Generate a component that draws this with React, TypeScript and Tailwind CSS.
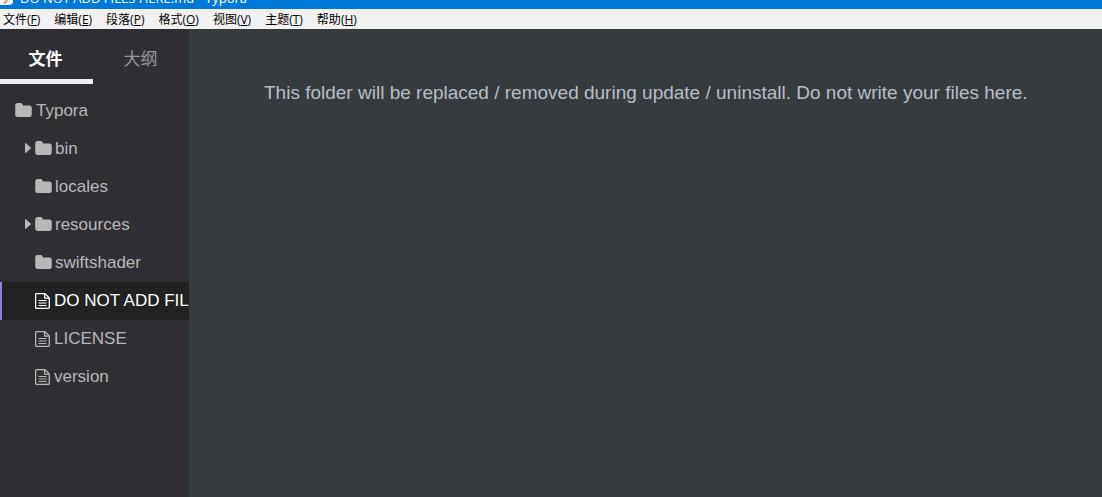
type Entry = {
  name: string;
  kind: 'folder' | 'file';
  expandable?: boolean;
  active?: boolean;
};

const menus = [
  { label: '文件', accessKey: 'F' },
  { label: '编辑', accessKey: 'E' },
  { label: '段落', accessKey: 'P' },
  { label: '格式', accessKey: 'O' },
  { label: '视图', accessKey: 'V' },
  { label: '主题', accessKey: 'T' },
  { label: '帮助', accessKey: 'H' },
];

const entries: Entry[] = [
  { name: 'bin', kind: 'folder', expandable: true },
  { name: 'locales', kind: 'folder' },
  { name: 'resources', kind: 'folder', expandable: true },
  { name: 'swiftshader', kind: 'folder' },
  { name: 'DO NOT ADD FILES HERE.md', kind: 'file', active: true },
  { name: 'LICENSE', kind: 'file' },
  { name: 'version', kind: 'file' },
];

const FolderIcon = () => (
  <svg viewBox="0 128 1664 1408" className="mb-[2px] h-[14px] w-[17px] shrink-0" fill="currentColor" aria-hidden="true">
    <path d="M1664 608v704q0 92-66 158t-158 66h-1216q-92 0-158-66t-66-158v-960q0-92 66-158t158-66h320q92 0 158 66t66 158v32h672q92 0 158 66t66 158z" />
  </svg>
);

const FileIcon = () => (
  <svg viewBox="0 0 16 16" className="h-4 w-4 shrink-0" fill="none" stroke="currentColor" strokeWidth="1.3" aria-hidden="true">
    <path d="M1.2.7h8.3q.6 0 1.1.5l3.2 3.2q.5.5.5 1.1v9q0 .8-.8.8H1.2q-.6 0-.6-.6V1.3q0-.6.6-.6z" />
    <path d="M9.6 1v4.2h4.4" />
    <path d="M3.5 7.5h8M3.5 10h8M3.5 12.5h8" strokeWidth="1.1" />
  </svg>
);

const CaretIcon = () => (
  <svg viewBox="0 0 6 10" className="mb-[2px] h-[10px] w-[6px]" fill="currentColor" aria-hidden="true">
    <path d="M0 .6Q0 0 .6 0L1 .2 5.7 4.5Q6 5 5.7 5.5L1 9.8.6 10Q0 10 0 9.4z" />
  </svg>
);

const TreeRow = ({ entry }: { entry: Entry }) => (
  <li>
    <button
      type="button"
      className={
        entry.active
          ? 'flex h-[38px] w-full items-center gap-[3px] overflow-hidden border-l-2 border-[#8c83e0] bg-[#222222] pl-[23px] text-white'
          : 'flex h-[38px] w-full items-center gap-[3px] overflow-hidden border-l-2 border-transparent pl-[23px]'
      }
    >
      <span className="w-[7px] shrink-0">{entry.expandable && <CaretIcon />}</span>
      {entry.kind === 'folder' ? <FolderIcon /> : <FileIcon />}
      <span className="whitespace-nowrap">{entry.name}</span>
    </button>
  </li>
);

const App = () => {
  return (
    <div className="flex h-screen flex-col overflow-hidden bg-[#363b3e] font-['Liberation_Sans','Noto_Sans_CJK_SC',sans-serif]">
      <header className="flex h-[9px] shrink-0 items-end gap-[7px] overflow-hidden bg-[#0078d7] font-['Open_Sans','Noto_Sans_CJK_SC',sans-serif] text-[13px] leading-[22px] text-white">
        <svg viewBox="0 0 13 16" className="mb-1 h-4 w-[13px] shrink-0" aria-hidden="true">
          <path d="M0 0h13v14l-3 2H0z" fill="#f4f4f6" />
          <path d="M3 14l4-4 1 2-3 3z" fill="#e39a93" />
        </svg>
        <span className="whitespace-nowrap">DO NOT ADD FILES HERE.md - Typora</span>
      </header>

      <nav className="flex h-5 shrink-0 items-center gap-[14px] bg-[#f1f1f1] pt-[2px] pl-[3px] font-['Open_Sans','Noto_Sans_CJK_SC',sans-serif] text-xs text-black">
        {menus.map((menu) => (
          <button key={menu.accessKey} type="button" className="whitespace-nowrap">
            {menu.label}(<span className="underline">{menu.accessKey}</span>)
          </button>
        ))}
      </nav>

      <div className="flex min-h-0 flex-1">
        <aside className="w-[189px] shrink-0 overflow-hidden bg-[#2f2f33] text-[17px] text-[#b8b8b9]">
          <div className="grid h-[55px] grid-cols-2 pr-[3px]">
            <button type="button" className="border-b-5 border-[#f0eef4] pt-3 pr-[2px] font-bold text-white">
              文件
            </button>
            <button type="button" className="border-b-5 border-transparent pt-3 pl-[2px] text-[#96989b]">
              大纲
            </button>
          </div>
          <div className="mt-2 flex h-[38px] items-center gap-1 pl-[15px]">
            <FolderIcon />
            <span>Typora</span>
          </div>
          <ul>
            {entries.map((entry) => (
              <TreeRow key={entry.name} entry={entry} />
            ))}
          </ul>
        </aside>

        <main className="min-w-0 flex-1 pt-[50px] pr-10 pl-[75px]">
          <p className="text-[19px] leading-7 text-[#b8bfc6]">
            This folder will be replaced / removed during update / uninstall. Do not write your files here.
          </p>
        </main>
      </div>
    </div>
  );
};

export default App;
